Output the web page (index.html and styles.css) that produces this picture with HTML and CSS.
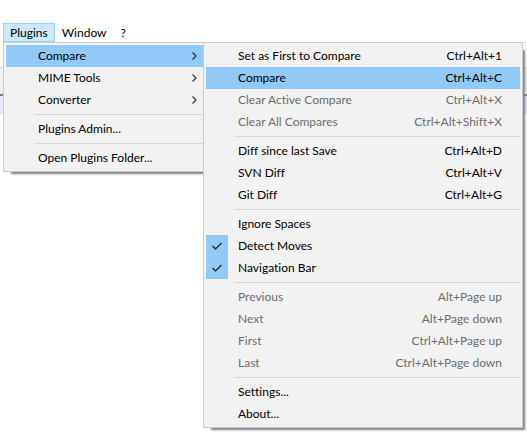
FILE: index.html
```html
<!DOCTYPE html>
<html lang="en">
<head>
<meta charset="utf-8">
<title>Plugins menu</title>
<link rel="stylesheet" href="styles.css">
</head>
<body>
<svg class="defs" aria-hidden="true">
  <symbol id="chevron" viewBox="0 0 8 8"><path d="M2.5 0.5 6 4 2.5 7.5"/></symbol>
  <symbol id="check" viewBox="0 0 12 10"><path d="M1.5 5 4.5 8 10.5 2"/></symbol>
</svg>
<nav class="menubar" aria-label="Menu bar">
  <button class="tab open" type="button">Plugins</button>
  <button class="tab" type="button">Window</button>
  <button class="tab" type="button">?</button>
</nav>
<main class="window">
  <div class="backdrop">
    <div class="toolbar"></div>
    <div class="docbar"></div>
  </div>
  <div class="menus">
    <div class="menu parent" role="menu">
      <button class="item active" type="button"><span>Compare</span><svg class="chevron"><use href="#chevron"/></svg></button>
      <button class="item" type="button"><span>MIME Tools</span><svg class="chevron"><use href="#chevron"/></svg></button>
      <button class="item" type="button"><span>Converter</span><svg class="chevron"><use href="#chevron"/></svg></button>
      <hr>
      <button class="item" type="button"><span>Plugins Admin...</span></button>
      <hr>
      <button class="item" type="button"><span>Open Plugins Folder...</span></button>
    </div>
    <div class="menu sub" role="menu">
      <button class="item" type="button"><span>Set as First to Compare</span><kbd>Ctrl+Alt+1</kbd></button>
      <button class="item active" type="button"><span>Compare</span><kbd>Ctrl+Alt+C</kbd></button>
      <button class="item" type="button" disabled><span>Clear Active Compare</span><kbd>Ctrl+Alt+X</kbd></button>
      <button class="item" type="button" disabled><span>Clear All Compares</span><kbd>Ctrl+Alt+Shift+X</kbd></button>
      <hr>
      <button class="item" type="button"><span>Diff since last Save</span><kbd>Ctrl+Alt+D</kbd></button>
      <button class="item" type="button"><span>SVN Diff</span><kbd>Ctrl+Alt+V</kbd></button>
      <button class="item" type="button"><span>Git Diff</span><kbd>Ctrl+Alt+G</kbd></button>
      <hr>
      <button class="item" type="button"><span>Ignore Spaces</span></button>
      <button class="item" type="button"><i class="mark"><svg class="check"><use href="#check"/></svg></i><span>Detect Moves</span></button>
      <button class="item" type="button"><i class="mark"><svg class="check"><use href="#check"/></svg></i><span>Navigation Bar</span></button>
      <hr>
      <button class="item" type="button" disabled><span>Previous</span><kbd>Alt+Page up</kbd></button>
      <button class="item" type="button" disabled><span>Next</span><kbd>Alt+Page down</kbd></button>
      <button class="item" type="button" disabled><span>First</span><kbd>Ctrl+Alt+Page up</kbd></button>
      <button class="item" type="button" disabled><span>Last</span><kbd>Ctrl+Alt+Page down</kbd></button>
      <hr>
      <button class="item" type="button"><span>Settings...</span></button>
      <button class="item" type="button"><span>About...</span></button>
    </div>
  </div>
</main>
</body>
</html>
```
FILE: styles.css
```css
* { box-sizing: border-box; }
body {
  margin: 0;
  min-height: 100vh;
  background: #fff;
  color: #000;
  font: 12px/20px Lato, "Open Sans", sans-serif;
  font-variant-ligatures: none;
}
button { font: inherit; font-variant-ligatures: inherit; color: inherit; border: 0; background: none; }
.defs { display: none; }
.menubar { display: flex; padding: 23px 3px 0; }
.tab { height: 19px; padding: 0 6px; border: 1px solid transparent; line-height: 17px; }
.tab.open { background: #cce8ff; border-color: #99d1ff; }
.window { display: grid; }
.backdrop, .menus { grid-area: 1 / 1; }
.backdrop { border-top: 1px solid #f0f0f0; padding-top: 24px; }
.toolbar { height: 29px; background: #f0f0f0; border-top: 1px solid #dadada; border-bottom: 2px solid #808080; }
.docbar { height: 18px; background: #e6e6fa; }
.menus { display: flex; align-items: flex-start; padding: 0 4px 4px 3px; }
.menu {
  padding: 2px;
  border: 1px solid #ccc;
  background: #f2f2f2;
  box-shadow: 5px 5px 2px -3px #808080;
}
.parent { width: 201px; flex: none; padding-right: 0; }
.sub { flex: 1; margin-left: -1px; z-index: 1; }
.item {
  position: relative;
  display: flex;
  align-items: center;
  justify-content: space-between;
  width: 100%;
  height: 22px;
  padding: 0 18px 0 32px;
  line-height: 22px;
  text-align: left;
}
.item:disabled { color: #6d6d6d; }
.item.active { background: #91c9f7; }
.parent .item { padding-right: 5px; }
kbd { font: inherit; }
hr { height: 1px; margin: 3px 0 3px 28px; border: 0; background: #d7d7d7; }
.mark {
  position: absolute;
  left: 0;
  top: 0;
  display: flex;
  align-items: center;
  justify-content: center;
  width: 22px;
  height: 22px;
  background: #91c9f7;
}
svg { fill: none; stroke: #333; }
.chevron { width: 8px; height: 8px; stroke-width: 1.2; }
.check { width: 12px; height: 10px; stroke-width: 1.5; }
```
